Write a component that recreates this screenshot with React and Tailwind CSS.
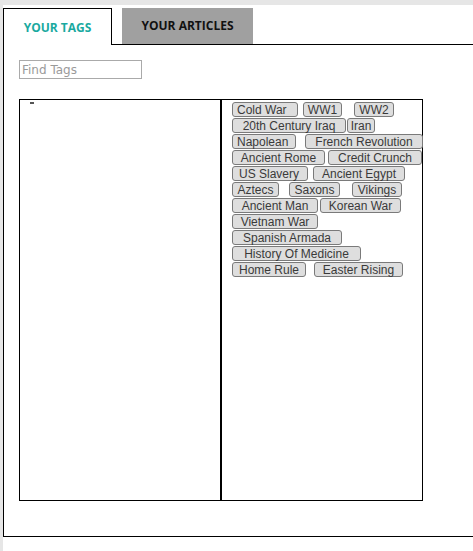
import React from 'react';

const tagRows = [
  [
    { label: 'Cold War', cls: 'w-[66px] pl-[4px]' },
    { label: 'WW1', cls: 'ml-[5px] w-[39px] justify-center' },
    { label: 'WW2', cls: 'ml-[12px] w-[40px] justify-center' },
  ],
  [
    { label: '20th Century Iraq', cls: 'w-[114px] justify-center' },
    { label: 'Iran', cls: 'ml-[1px] w-[28px] justify-center' },
  ],
  [
    { label: 'Napolean', cls: 'w-[64px] pl-[4px]' },
    { label: 'French Revolution', cls: 'ml-[9px] w-[118px] justify-center' },
  ],
  [
    { label: 'Ancient Rome', cls: 'w-[93px] justify-center' },
    { label: 'Credit Crunch', cls: 'ml-[3px] w-[94px] justify-center' },
  ],
  [
    { label: 'US Slavery', cls: 'w-[76px] pl-[6px]' },
    { label: 'Ancient Egypt', cls: 'ml-[5px] w-[92px] justify-center' },
  ],
  [
    { label: 'Aztecs', cls: 'w-[47px] justify-center' },
    { label: 'Saxons', cls: 'ml-[10px] w-[51px] justify-center' },
    { label: 'Vikings', cls: 'ml-[12px] w-[50px] justify-center' },
  ],
  [
    { label: 'Ancient Man', cls: 'w-[86px] justify-center' },
    { label: 'Korean War', cls: 'ml-[2px] w-[81px] justify-center' },
  ],
  [{ label: 'Vietnam War', cls: 'w-[86px] justify-center' }],
  [{ label: 'Spanish Armada', cls: 'w-[110px] justify-center' }],
  [{ label: 'History Of Medicine', cls: 'w-[129px] justify-center' }],
  [
    { label: 'Home Rule', cls: 'w-[74px] justify-center' },
    { label: 'Easter Rising', cls: 'ml-[8px] w-[89px] justify-center' },
  ],
];

const uiFont = { fontFamily: '"DejaVu Sans", "Liberation Sans", sans-serif' };
const tabFont = { fontFamily: '"Open Sans", "DejaVu Sans", sans-serif' };

export default function App() {
  return (
    <div className="min-h-screen bg-[#e6e6e6] pl-[3px] pt-[5px]">
      <div className="h-[546px] bg-white pt-[3px]">
        {/* tabs */}
        <div className="flex h-[37px]">
          <div
            className="flex w-[109px] items-center justify-center border-l border-r border-t border-black bg-white pt-[1px] text-[12px] font-bold text-[#1aa9a0]"
            style={tabFont}
          >
            YOUR TAGS
          </div>
          <div className="w-[10px] border-b border-black" />
          <div
            className="flex w-[131px] items-center justify-center border-b border-black bg-[#a0a0a0] text-[12px] font-bold text-[#111]"
            style={tabFont}
          >
            YOUR ARTICLES
          </div>
          <div className="flex-1 border-b border-black" />
        </div>

        {/* panel */}
        <div className="h-[492px] border-b border-l border-black pl-[15px] pt-[15px]">
          <input
            type="text"
            placeholder="Find Tags"
            className="block h-[19px] w-[123px] border border-[#aaaaaa] px-[2px] text-[12px] text-[#333] placeholder:text-[#9a9a9a] outline-none"
            style={uiFont}
          />

          <div className="mt-[20px] flex">
            <div className="h-[402px] w-[202px] border border-black pl-[10px] pt-[2px]">
              <div className="h-[2px] w-[4px] bg-[#555]" />
            </div>
            <div
              className="h-[402px] w-[202px] border border-black pl-[10px] pt-[2px]"
              style={{ fontFamily: '"Liberation Sans", Arial, sans-serif' }}
            >
              {tagRows.map((row, i) => (
                <div key={i} className="mb-[1px] flex">
                  {row.map((tag) => (
                    <button
                      key={tag.label}
                      className={`flex h-[15px] shrink-0 items-center whitespace-nowrap rounded-[3px] border border-[#7a7a7a] bg-[#dedede] text-[12px] leading-none text-[#3a3a3a] ${tag.cls}`}
                    >
                      {tag.label}
                    </button>
                  ))}
                </div>
              ))}
            </div>
          </div>
        </div>
      </div>
    </div>
  );
}
